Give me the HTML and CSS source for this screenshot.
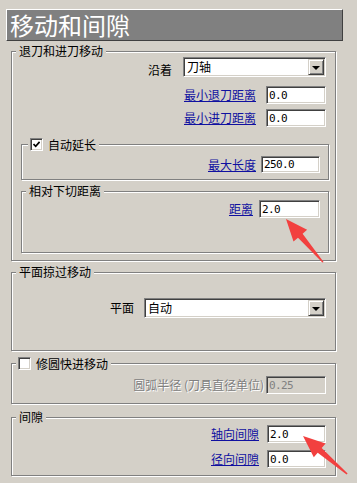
FILE: index.html
```html
<!DOCTYPE html>
<html lang="zh-CN">
<head>
    <meta charset="UTF-8">
    <meta name="viewport" content="width=device-width, initial-scale=1.0">
    <title>移动和间隙</title>
    <link rel="stylesheet" href="styles.css">
</head>
<body>
    <div class="panel">
        <div class="titlebar">移动和间隙</div>

        <div class="group g-retract">
            <span class="legend">退刀和进刀移动</span>
            <div class="row row-select gap-11">
                <span class="label label-low">沿着</span>
                <div class="select w-along">
                    <span class="select-value">刀轴</span>
                    <span class="select-btn"><span class="tri"></span></span>
                </div>
            </div>
            <div class="row row-first gap-10">
                <a class="link" href="#">最小退刀距离</a>
                <input class="field w-60" type="text" value="0.0" readonly>
            </div>
            <div class="row row-next gap-10">
                <a class="link" href="#">最小进刀距离</a>
                <input class="field w-60" type="text" value="0.0" readonly>
            </div>

            <div class="group sub g-extend">
                <span class="legend legend-check">
                    <span class="checkbox">
                        <svg width="7" height="7" viewBox="0 0 7 7"><path d="M0.5 3 L2.7 5.3 L6.6 0.8" fill="none" stroke="#000" stroke-width="1.7"/></svg>
                    </span>
                    自动延长
                </span>
                <div class="row row-h17 gap-5">
                    <a class="link" href="#">最大长度</a>
                    <input class="field w-59 h-17" type="text" value="250.0" readonly>
                </div>
            </div>

            <div class="group sub g-plunge">
                <span class="legend">相对下切距离</span>
                <div class="row gap-6">
                    <a class="link" href="#">距离</a>
                    <input class="field w-61" type="text" value="2.0" readonly>
                </div>
            </div>
        </div>

        <div class="group g-plane">
            <span class="legend">平面掠过移动</span>
            <div class="row row-select gap-10">
                <span class="label">平面</span>
                <div class="select w-plane">
                    <span class="select-value">自动</span>
                    <span class="select-btn"><span class="tri"></span></span>
                </div>
            </div>
        </div>

        <div class="group g-round">
            <span class="legend legend-check">
                <span class="checkbox"></span>
                修圆快进移动
            </span>
            <div class="row gap-2">
                <span class="label disabled">圆弧半径 (刀具直径单位)</span>
                <input class="field field-disabled w-60" type="text" value="0.25" readonly>
            </div>
        </div>

        <div class="group g-gap">
            <span class="legend">间隙</span>
            <div class="row gap-8">
                <a class="link" href="#">轴向间隙</a>
                <input class="field w-59" type="text" value="2.0" readonly>
            </div>
            <div class="row row-next2 gap-8">
                <a class="link" href="#">径向间隙</a>
                <input class="field w-59" type="text" value="0.0" readonly>
            </div>
        </div>

        <!-- annotation arrows drawn over the dialog -->
        <svg class="arrows" width="357" height="483" viewBox="0 0 357 483">
            <polygon points="286,219 307.1,229.8 302.6,233.7 323.6,262 322.4,262.6 298,237.7 293.5,241.6" fill="#f2403f"/>
            <polygon points="303,436 325.6,443.6 321.7,448.1 347.6,473.6 346.6,474.6 317.7,452.7 313.8,457.2" fill="#f2403f"/>
        </svg>
    </div>
</body>
</html>
```

FILE: styles.css
```css
body {
    margin: 0;
    background-color: #d4d0c8;
    font-family: "Noto Sans CJK SC", sans-serif;
    font-size: 12px;
    color: #000;
}
.panel {
    position: relative;
    width: 357px;
    height: 483px;
    padding-top: 9px;
    box-sizing: border-box;
    overflow: hidden;
}
.titlebar {
    margin-left: 6px;
    width: 337px;
    height: 32px;
    box-sizing: border-box;
    background-color: #808080;
    border: 1px solid;
    border-color: #fff #404040 #404040 #fff;
    color: #fff;
    font-size: 24px;
    line-height: 30px;
    padding-left: 3px;
    white-space: nowrap;
}

/* etched group boxes */
.group {
    position: relative;
    margin-left: 11px;
    width: 325px;
    box-sizing: border-box;
    border: 1px solid #808080;
    box-shadow: inset 1px 1px 0 #fff, 1px 1px 0 #fff;
}
.g-retract {
    margin-top: 10px;
    padding: 5px 0 7px;
}
.g-plane {
    margin-top: 11px;
    padding: 25px 0 32px;
}
.g-round {
    margin-top: 12px;
    padding: 12px 0 9px;
}
.g-gap {
    margin-top: 13px;
    padding: 7px 0 7px;
}
.group.sub {
    margin-left: 9px;
    width: 308px;
}
.g-extend {
    margin-top: 17px;
    padding: 11px 0 6px;
}
.g-plunge {
    margin-top: 11px;
    padding: 8px 0 34px;
}
.legend {
    position: absolute;
    top: -7px;
    left: 4px;
    padding: 0 3px;
    line-height: 12px;
    background-color: #d4d0c8;
    white-space: nowrap;
}
.legend-check {
    display: flex;
    align-items: center;
    gap: 5px;
    height: 13px;
    left: 4px;
    padding: 0 3px 0 2px;
}
.g-extend .legend-check {
    left: 6px;
}

/* rows of label + control */
.row {
    display: flex;
    justify-content: flex-end;
    align-items: center;
    height: 18px;
    padding-right: 9px;
}
.group.sub .row {
    padding-right: 8px;
}
.row-select {
    height: 20px;
}
.row-h17 {
    height: 17px;
}
.row-first {
    margin-top: 9px;
}
.row-next {
    margin-top: 5px;
}
.row-next2 {
    margin-top: 7px;
}
.gap-2 { gap: 2px; }
.gap-5 { gap: 5px; }
.gap-6 { gap: 6px; }
.gap-8 { gap: 8px; }
.gap-10 { gap: 10px; }
.gap-11 { gap: 11px; }

.label {
    line-height: 12px;
    white-space: nowrap;
}
.label-low {
    margin-top: 6px;
}
.link {
    color: #1010a0;
    text-decoration: underline;
    line-height: 12px;
    white-space: nowrap;
}
.disabled {
    color: #808080;
    text-shadow: 1px 1px 0 #fff;
}

/* sunken text fields */
.field {
    box-sizing: border-box;
    height: 18px;
    margin: 0;
    padding: 0 2px;
    border: 1px solid;
    border-color: #808080 #fff #fff #808080;
    box-shadow: inset 1px 1px 0 #404040, inset -1px -1px 0 #d4d0c8;
    background-color: #fff;
    font-family: "DejaVu Sans Mono", monospace;
    font-size: 11px;
    letter-spacing: -0.6px;
    color: #000;
    outline: none;
}
.field-disabled {
    background-color: #d4d0c8;
    color: #808080;
}
.w-59 { width: 59px; }
.w-60 { width: 60px; }
.w-61 { width: 61px; }
.h-17 { height: 17px; }

/* drop-down boxes */
.select {
    display: flex;
    align-items: center;
    box-sizing: border-box;
    height: 20px;
    border: 1px solid;
    border-color: #808080 #fff #fff #808080;
    box-shadow: inset 1px 1px 0 #404040, inset -1px -1px 0 #d4d0c8;
    background-color: #fff;
}
.w-along { width: 143px; }
.w-plane { width: 182px; }
.select-value {
    flex-grow: 1;
    padding-left: 3px;
    line-height: 12px;
}
.select-btn {
    display: flex;
    align-items: center;
    justify-content: center;
    box-sizing: border-box;
    width: 16px;
    height: 16px;
    margin-right: 1px;
    background-color: #d4d0c8;
    border: 1px solid;
    border-color: #d4d0c8 #404040 #404040 #d4d0c8;
    box-shadow: inset 1px 1px 0 #fff, inset -1px -1px 0 #808080;
}
.tri {
    width: 0;
    height: 0;
    border-left: 4px solid transparent;
    border-right: 4px solid transparent;
    border-top: 4px solid #000;
    margin-top: 1px;
}

/* check boxes */
.checkbox {
    display: flex;
    align-items: center;
    justify-content: center;
    box-sizing: border-box;
    width: 13px;
    height: 13px;
    background-color: #fff;
    border: 1px solid;
    border-color: #808080 #fff #fff #808080;
    box-shadow: inset 1px 1px 0 #404040, inset -1px -1px 0 #d4d0c8;
}

.arrows {
    position: absolute;
    top: 0;
    left: 0;
    pointer-events: none;
}
```
